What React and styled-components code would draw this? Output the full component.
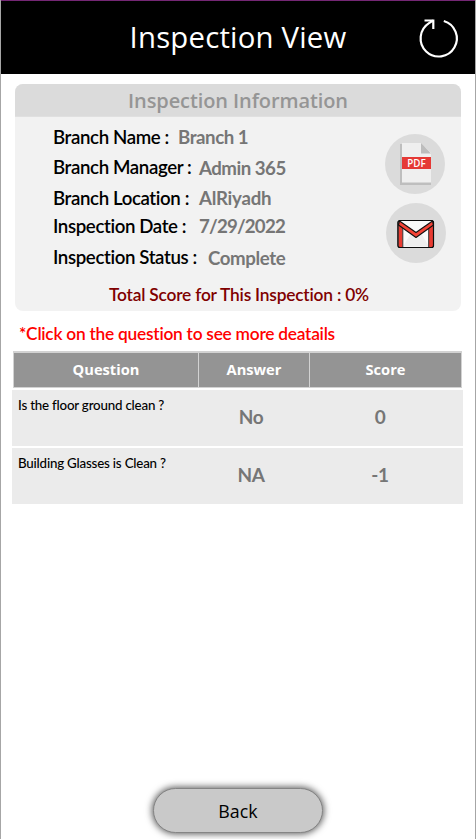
import React from "react";
import styled, { createGlobalStyle } from "styled-components";

const GlobalStyle = createGlobalStyle`
  * { box-sizing: border-box; }
  body { margin: 0; background: #fff; }
`;

const Screen = styled.div`
  display: flex;
  flex-direction: column;
  width: 476px;
  height: 839px;
  overflow: hidden;
  border-left: 1px solid #a6a6a6;
  border-right: 1px solid #a6a6a6;
  font-family: Lato, "Liberation Sans", sans-serif;
  font-variant-ligatures: none;
  color: #000;
`;

const Header = styled.header`
  display: grid;
  grid-template-columns: 73px 1fr 73px;
  align-items: center;
  flex: none;
  height: 74px;
  background: #000;
  border-top: 1px solid #742774;
`;

const Title = styled.h1`
  grid-column: 2;
  margin: 0;
  padding-bottom: 2px;
  text-align: center;
  font: 400 29.33px/40px "Open Sans", sans-serif;
  letter-spacing: 0.2px;
  color: #fff;
  white-space: nowrap;
`;

const IconButton = styled.button`
  display: block;
  padding: 0;
  border: 0;
  background: none;
  cursor: pointer;
  svg { display: block; }
`;

const RefreshButton = styled(IconButton)`
  width: 44px;
  height: 44px;
  margin-left: 15px;
`;

const Card = styled.section`
  flex: none;
  width: 446px;
  height: 227px;
  margin: 10px 0 0 14px;
  border-radius: 8px;
  overflow: hidden;
  background: #f2f2f2;
`;

const CardTitle = styled.h2`
  margin: 0;
  height: 33px;
  border-bottom: 1px solid #e0e0e0;
  background: #dbdbdb;
  color: #959595;
  text-align: center;
  font: 600 20px/34px "Open Sans", sans-serif;
  letter-spacing: -0.1px;
`;

const CardBody = styled.div`
  display: grid;
  grid-template-columns: 1fr 60px;
  height: 160px;
  padding: 5px 16px 0 38px;
`;

const InfoList = styled.dl`
  display: grid;
  grid-template-rows: 30px 30px 31px 26px 36px;
  margin: 0;
  font-size: 18.67px;
  font-weight: 600;
  white-space: nowrap;
`;

const InfoRow = styled.div`
  display: flex;
  align-items: center;
  line-height: 24px;
`;

const InfoLabel = styled.dt`
  width: ${(p) => p.$width}px;
  letter-spacing: -0.38px;
`;

const InfoValue = styled.dd`
  margin: 0;
  padding-top: ${(p) => p.$drop || 0}px;
  color: #767676;
  font-weight: 700;
  letter-spacing: ${(p) => p.$tracking}px;
`;

const Actions = styled.div`
  display: flex;
  flex-direction: column;
  gap: 9px;
  padding-top: 12px;
`;

const RoundButton = styled(IconButton)`
  width: 60px;
  height: 60px;
  margin-left: ${(p) => p.$shift || 0}px;
  border-radius: 50%;
  background: #dbdbdb;
`;

const Total = styled.p`
  margin: 0;
  padding-left: 2px;
  text-align: center;
  color: #800000;
  font-size: 17.33px;
  font-weight: 600;
  letter-spacing: -0.2px;
  line-height: 36px;
  white-space: nowrap;
`;

const Hint = styled.p`
  flex: none;
  height: 40px;
  margin: 0 0 0 18px;
  color: #f00;
  font-size: 17.33px;
  font-weight: 600;
  letter-spacing: -0.25px;
  line-height: 46px;
  white-space: nowrap;
`;

const TableHead = styled.div`
  display: grid;
  grid-template-columns: 184px 110px 151px;
  column-gap: 1px;
  flex: none;
  width: 449px;
  height: 37px;
  margin-left: 12px;
  border: 1px solid #d2d2d2;
  border-top-width: 2px;
  background: #d2d2d2;
`;

const HeadCell = styled.div`
  background: #949494;
  color: #fff;
  text-align: center;
  font: 700 14.67px/33px "Open Sans", sans-serif;
`;

const Rows = styled.div`
  display: grid;
  grid-template-rows: 56px 56px;
  row-gap: 2px;
  flex: none;
  width: 451px;
  margin: 2px 0 0 11px;
`;

const Row = styled.div`
  display: grid;
  grid-template-columns: 187px 104px 154px;
  background: #ebebeb;
`;

const Question = styled.div`
  padding: 5px 0 0 6px;
  font-size: 13.33px;
  font-weight: 500;
  letter-spacing: -0.2px;
  line-height: 20px;
  white-space: nowrap;
`;

const Cell = styled.div`
  color: #767676;
  text-align: center;
  font-size: 19px;
  font-weight: 700;
  letter-spacing: -0.4px;
  line-height: 53px;
`;

const Footer = styled.footer`
  display: flex;
  justify-content: center;
  margin-top: auto;
  padding-bottom: 6px;
`;

const BackButton = styled.button`
  width: 170px;
  height: 45px;
  padding: 0;
  border: 1px solid #858585;
  border-radius: 23px;
  background: #c9c9c9;
  box-shadow: 0 0 7px 1px rgba(0, 0, 0, 0.65);
  font: 400 17.8px/44px "Open Sans", sans-serif;
  letter-spacing: 0.1px;
  color: #000;
  cursor: pointer;
`;

const RefreshIcon = () => (
  <svg width="44" height="44" viewBox="0 0 44 44" fill="none" stroke="#fff" strokeWidth="2.2">
    <path d="M26.800 5A18.100 18.100 0 1 1 12 7.100L16 4.500" />
    <path d="M7.500 4.500h8.800v8.500" />
  </svg>
);

const PdfIcon = () => (
  <svg width="60" height="60" viewBox="0 0 60 60">
    <path d="M15 10h22l9 10v31H15z" fill="#bebebe" />
    <path d="M17 9h19l10 10v29.500H17z" fill="#efefef" />
    <path d="M36 9v10.500h10z" fill="#bdbdbd" />
    <path d="M17 23h29v12H17z" fill="#e53935" />
    <text x="31.500" y="32.500" textAnchor="middle" fontFamily="Open Sans, sans-serif" fontSize="9.800" fontWeight="600" fill="#fff">PDF</text>
  </svg>
);

const MailIcon = () => (
  <svg width="60" height="60" viewBox="0 0 60 60">
    <rect x="12" y="17.500" width="35.500" height="27" rx="2" fill="#fafafa" stroke="#0d0d0d" />
    <path d="M17 43.500l9-15 4 4 4-4 9 15z" fill="#eeeeee" />
    <path d="M12.500 20.500l4.200 3v20.500h-4.200zM47 20.500l-4.200 3v20.500H47z" fill="#e83b31" />
    <path d="M16.800 24.500v19.500M42.700 24.500v19.500" stroke="#333" />
    <path d="M13.500 18L30 29.500l16.500-11.500 1 4L30 34.500 12.500 22z" fill="#f44336" stroke="#111" strokeWidth="1.100" strokeLinejoin="round" />
    <rect x="12" y="17.500" width="35.500" height="27" rx="2" fill="none" stroke="#0d0d0d" strokeWidth="1.200" />
  </svg>
);

const info = [
  { label: "Branch Name :", value: "Branch 1", width: 125, tracking: -0.45 },
  { label: "Branch Manager :", value: "Admin 365", width: 146, tracking: -0.5, drop: 2 },
  { label: "Branch Location :", value: "AlRiyadh", width: 146, tracking: -0.25 },
  { label: "Inspection Date :", value: "7/29/2022", width: 146, tracking: -0.8 },
  { label: "Inspection Status :", value: "Complete", width: 155, tracking: -0.4, drop: 2 },
];

const questions = [
  { text: "Is the floor ground clean ?", answer: "No", score: "0" },
  { text: "Building Glasses is Clean ?", answer: "NA", score: "-1" },
];

export default function App() {
  return (
    <Screen>
      <GlobalStyle />
      <Header>
        <Title>Inspection View</Title>
        <RefreshButton aria-label="Refresh"><RefreshIcon /></RefreshButton>
      </Header>
      <Card>
        <CardTitle>Inspection Information</CardTitle>
        <CardBody>
          <InfoList>
            {info.map((row) => (
              <InfoRow key={row.label}>
                <InfoLabel $width={row.width}>{row.label}</InfoLabel>
                <InfoValue $drop={row.drop} $tracking={row.tracking}>{row.value}</InfoValue>
              </InfoRow>
            ))}
          </InfoList>
          <Actions>
            <RoundButton aria-label="Export as PDF"><PdfIcon /></RoundButton>
            <RoundButton aria-label="Send by mail" $shift={1}><MailIcon /></RoundButton>
          </Actions>
        </CardBody>
        <Total>Total Score for This Inspection : 0%</Total>
      </Card>
      <Hint>*Click on the question to see more deatails</Hint>
      <TableHead>
        <HeadCell>Question</HeadCell>
        <HeadCell>Answer</HeadCell>
        <HeadCell>Score</HeadCell>
      </TableHead>
      <Rows>
        {questions.map((q) => (
          <Row key={q.text}>
            <Question>{q.text}</Question>
            <Cell>{q.answer}</Cell>
            <Cell>{q.score}</Cell>
          </Row>
        ))}
      </Rows>
      <Footer>
        <BackButton>Back</BackButton>
      </Footer>
    </Screen>
  );
}
